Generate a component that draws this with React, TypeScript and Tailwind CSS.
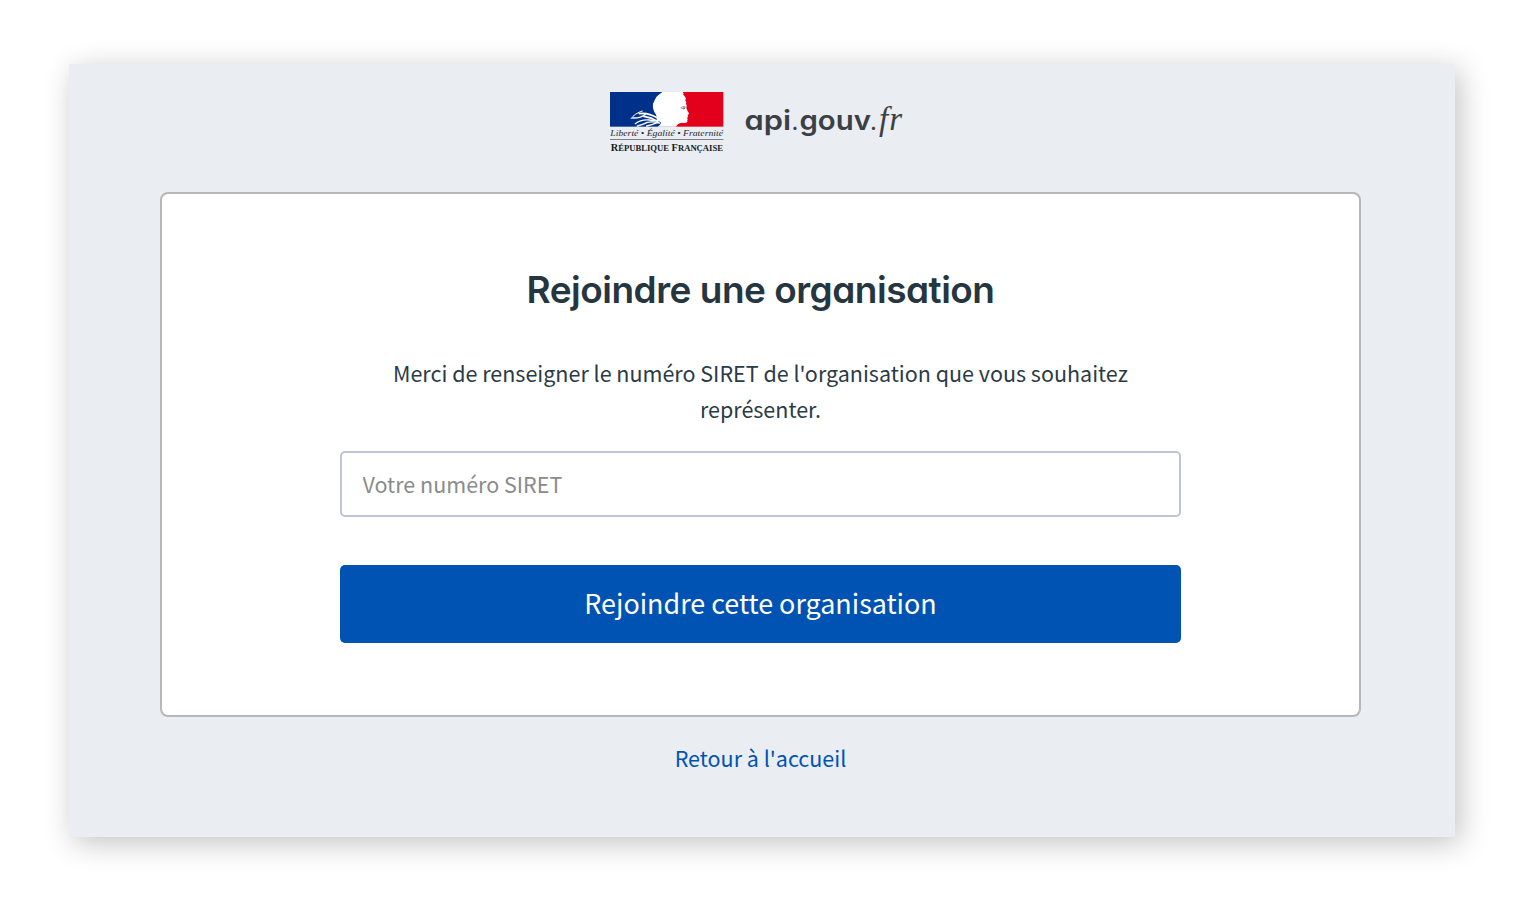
import React from "react";

const sans = "font-['Noto_Sans_CJK_JP','Noto_Sans',sans-serif]";

function RepubliqueLogo() {
  return (
    <svg width="114" height="62" viewBox="0 0 342 186" role="img" aria-label="République Française">
      <rect x="0" y="0" width="180" height="104" fill="#00318a" />
      <rect x="180" y="0" width="160" height="104" fill="#e2001a" />
      <path
        fill="#fff"
        d="M157 0 H218 L221 4 Q217 8 225 14 L228 20 Q224 23 229 31 Q226 35 230 40 L229 48 Q230 53 236 62 Q239 66 234 68 Q232 70 234 75 L231 78 L233 82 Q231 85 232 90 Q228 94 216 92 Q202 93 198 104 H143 Q152 98 153 92 Q148 86 140 86 Q143 76 137 66 Q127 53 129 35 Q134 24 139 15 Q146 8 157 0Z"
      />
      <g fill="none" stroke="#fff" strokeLinecap="round">
        <path d="M63 80 Q74 64 97 57" strokeWidth="3" />
        <path d="M68 78 Q92 79 108 65" strokeWidth="4" />
        <path d="M88 65 Q112 60 143 78" strokeWidth="5" />
        <path d="M102 73 Q124 76 143 88" strokeWidth="5" />
        <path d="M76 95 Q92 82 118 84 Q132 87 145 86" strokeWidth="4" />
        <path d="M82 102 Q98 98 112 91 Q128 88 148 93" strokeWidth="4" />
        <path d="M110 102 Q127 98 144 91" strokeWidth="4" />
      </g>
      <path d="M212 48 Q218 41 227 45 M214 49 Q221 53 226 48" stroke="#777b80" strokeWidth="2.3" fill="none" />
      <circle cx="222" cy="48" r="2.6" fill="#4b5158" />
      <text x="1" y="132" fontFamily="Liberation Serif, serif" fontStyle="italic" fontSize="22.5" textLength="338" lengthAdjust="spacingAndGlyphs" fill="#25282c">Liberté • Égalité • Fraternité</text>
      <path d="M0 142.5 H340" stroke="#55595e" strokeWidth="2.2" />
      <text x="2" y="176" fontFamily="Liberation Serif, serif" fontWeight="700" fontSize="30" textLength="337" lengthAdjust="spacingAndGlyphs" fill="#17191c">R<tspan fontSize="25">ÉPUBLIQUE</tspan> F<tspan fontSize="25">RANÇAISE</tspan></text>
    </svg>
  );
}

function ApiLogo() {
  return (
    <svg width="162" height="40" viewBox="0 0 162 40" role="img" aria-label="api.gouv.fr">
      <g fill="#3b4045">
        <text x="0.5" y="29" fontFamily="Inter, sans-serif" fontWeight="600" fontSize="27.5" textLength="46.5" lengthAdjust="spacingAndGlyphs" className="[font-feature-settings:'cv11']">api</text>
        <text x="47.5" y="29" fontFamily="Inter, sans-serif" fontSize="24">.</text>
        <text x="55.5" y="29" fontFamily="Inter, sans-serif" fontWeight="600" fontSize="27.5" textLength="71.5" lengthAdjust="spacingAndGlyphs">gouv</text>
        <text x="126" y="29" fontFamily="Inter, sans-serif" fontSize="24">.</text>
        <text x="135" y="29" fontFamily="Liberation Serif, serif" fontStyle="italic" fontSize="33" textLength="23">fr</text>
      </g>
    </svg>
  );
}

export default function App() {
  return (
    <div className="flex h-[899px] w-full flex-col overflow-hidden bg-white pl-[69px] pt-16">
      <main className={`flex h-[773px] w-[1386px] flex-col items-center pr-[3px] bg-[#eaedf2] text-[#2b3b45] shadow-[5px_6px_28px_rgba(0,0,0,0.24)] ${sans}`}>
        <header className="flex h-32 w-full shrink-0 items-start gap-5 pl-[541px] pt-7">
          <RepubliqueLogo />
          <div className="pt-[9px]"><ApiLogo /></div>
        </header>
        <section className="flex h-[525px] w-[1201px] shrink-0 flex-col items-center rounded-[8px] border-2 border-[#b5b7b9] bg-white pt-[69px]">
          <h1 className="h-[54px] whitespace-nowrap font-['Inter',sans-serif] text-[37px] font-semibold leading-[54px] tracking-[-0.5px] text-[#263640] [font-feature-settings:'cv11']">
            Rejoindre une organisation
          </h1>
          <form className="mt-[38px] flex w-[841px] flex-col" onSubmit={(e) => e.preventDefault()}>
            <label htmlFor="siret" className="text-center text-[21.5px] leading-9">
              Merci de renseigner le numéro SIRET de l'organisation que vous souhaitez
              <br />
              représenter.
            </label>
            <input
              id="siret"
              placeholder="Votre numéro SIRET"
              className="mt-[24px] h-[66px] rounded-[5px] border-2 border-[#bcc6d4] bg-white px-[20.5px] pb-[2px] text-[21.5px] outline-none placeholder:text-[#8b8b8b]"
            />
            <button className="mt-12 h-[78px] rounded-[5px] bg-[#0053b3] pb-px text-[26.9px] text-white">
              Rejoindre cette organisation
            </button>
          </form>
        </section>
        <a href="#" className="mt-[23px] text-[21.5px] leading-9 text-[#0053b3]">
          Retour à l'accueil
        </a>
      </main>
    </div>
  );
}
